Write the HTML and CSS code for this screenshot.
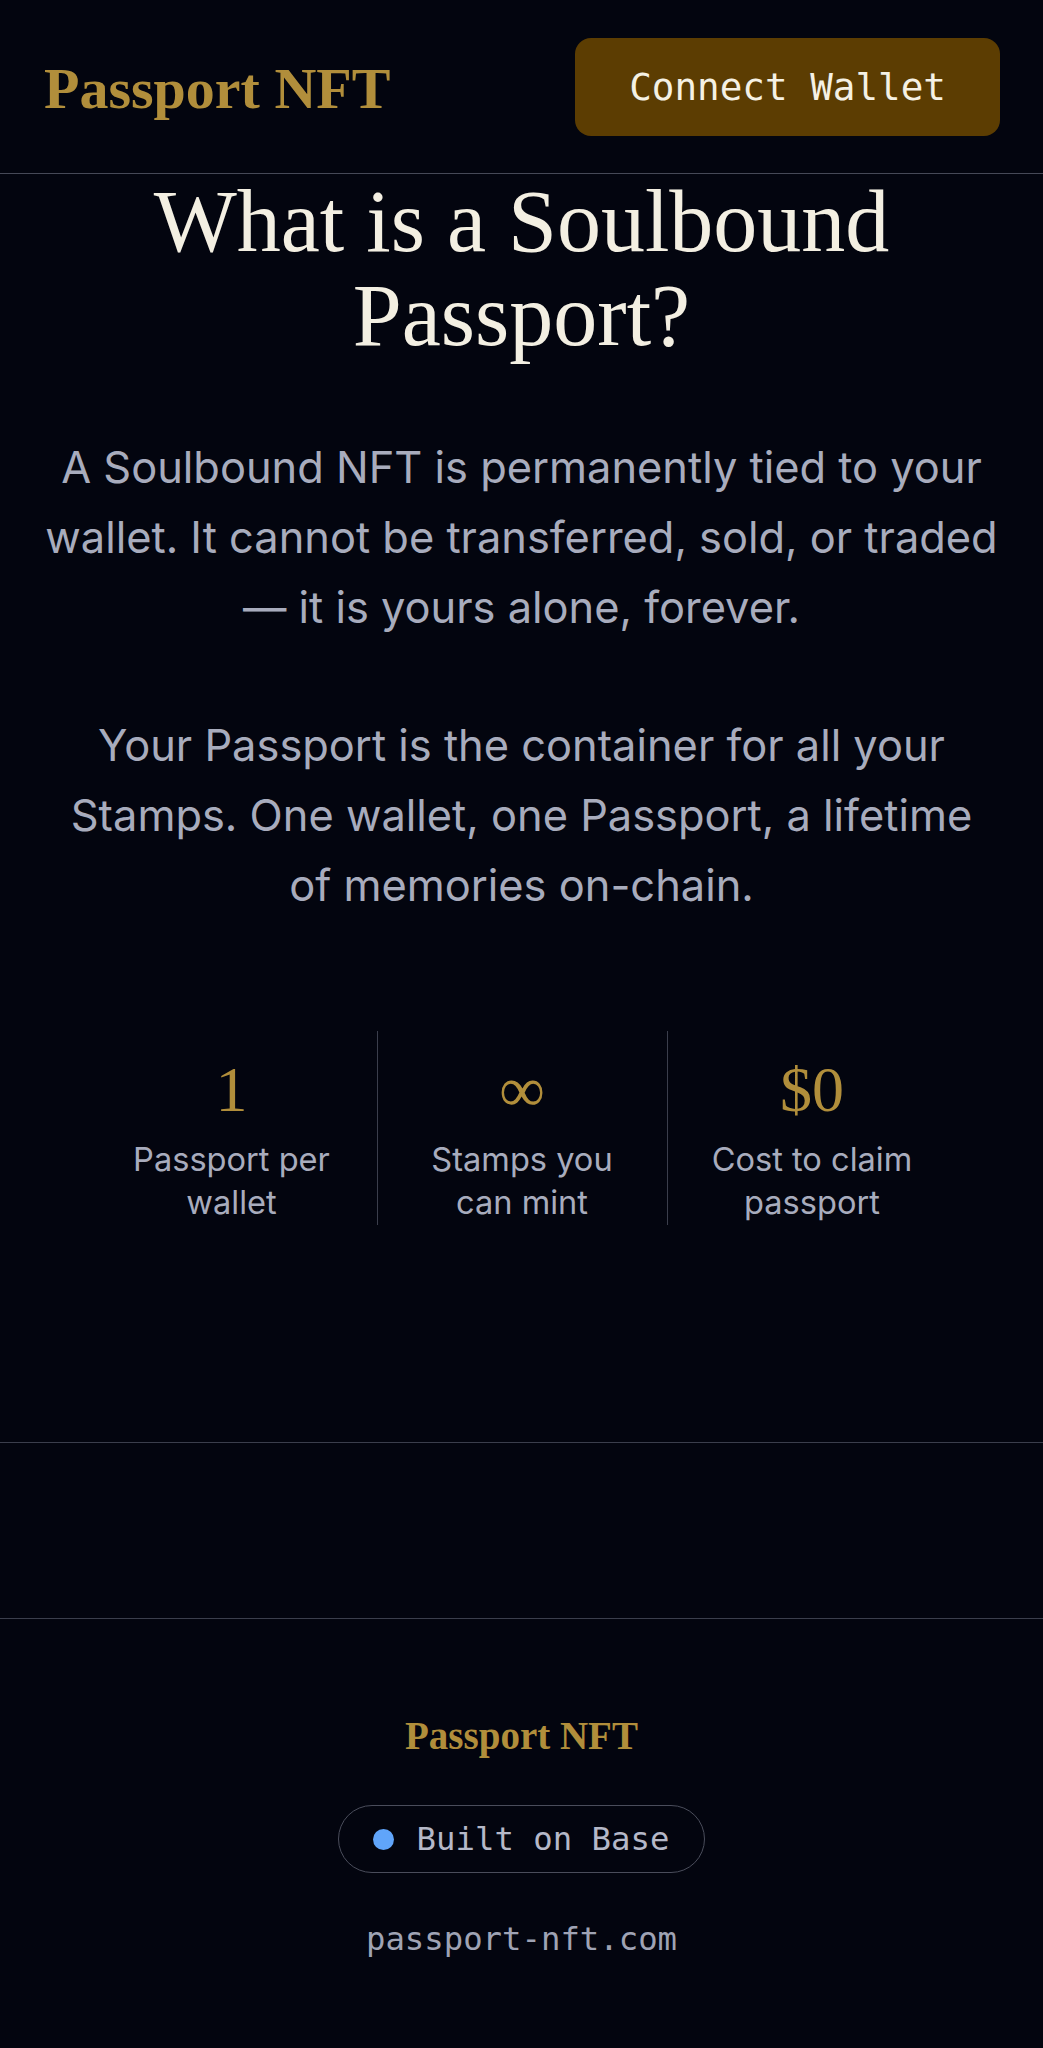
FILE: index.html
```html
<!DOCTYPE html>
<html lang="en">
  <head>
    <meta charset="UTF-8" />
    <meta name="viewport" content="width=device-width, initial-scale=1.0" />
    <title>Passport NFT</title>
    <link rel="stylesheet" href="styles.css">
  </head>
  <body>
    <header class="site-header">
      <div class="logo">Passport NFT</div>
      <button class="connect-btn">Connect Wallet</button>
    </header>
    <main>
      <section class="about">
        <h1>What is a Soulbound Passport?</h1>
        <p>A Soulbound NFT is permanently tied to your wallet. It cannot be transferred, sold, or traded — it is yours alone, forever.</p>
        <p>Your Passport is the container for all your Stamps. One wallet, one Passport, a lifetime of memories on-chain.</p>
        <div class="stats">
          <div class="stat">
            <div class="stat-value">1</div>
            <div class="stat-label">Passport per wallet</div>
          </div>
          <div class="stat">
            <div class="stat-value">∞</div>
            <div class="stat-label">Stamps you can mint</div>
          </div>
          <div class="stat">
            <div class="stat-value">$0</div>
            <div class="stat-label">Cost to claim passport</div>
          </div>
        </div>
      </section>
      <section class="empty-band"></section>
    </main>
    <footer class="site-footer">
      <div class="footer-logo">Passport NFT</div>
      <div class="chain-pill"><span class="dot"></span>Built on Base</div>
      <div class="domain">passport-nft.com</div>
    </footer>
  </body>
</html>
```
FILE: styles.css
```css
* { box-sizing: border-box; }
html, body { margin: 0; background: #03050f; }
body { font-family: Inter, "Noto Sans", sans-serif; color: #a8acbd; }

.site-header { display: flex; align-items: center; justify-content: space-between; height: 174px; padding: 0 43px 0 44px; border-bottom: 1px solid #464957; }
.logo { padding-top: 4px; font-family: "Liberation Serif", serif; font-size: 58px; font-weight: 700; color: #b18e3b; }
.connect-btn { height: 98px; padding: 0 54px; border: 0; border-radius: 16px; background: #5c3d02; color: #f5f1e4; font-family: "DejaVu Sans Mono", monospace; font-size: 37.6px; cursor: pointer; }

.about { padding: 1px 44px 217px; text-align: center; }
.about h1 { margin: 0; font-family: "Liberation Serif", serif; font-size: 88px; font-weight: 400; line-height: 94px; color: #f3efe2; }
.about p { margin: 68px 0 0; font-size: 43.4px; line-height: 70px; }
.about h1 + p { margin-top: 69px; }

.stats { display: grid; grid-template-columns: repeat(3, 290px); justify-content: center; margin-top: 111px; }
.stat { padding: 27px 32px 2px; }
.stat + .stat { border-left: 1px solid #3b3e4c; }
.stat-value { margin-bottom: 16px; font-family: "Liberation Serif", serif; font-size: 64px; line-height: 64px; color: #b18e3b; }
.stat-label { font-size: 32.6px; line-height: 42.7px; }

.empty-band { height: 176px; border-top: 1px solid #3b3e4c; }

.site-footer { display: flex; flex-direction: column; align-items: center; padding: 93px 0 85px; border-top: 1px solid #3b3e4c; }
.footer-logo { margin-bottom: 46px; font-family: "Liberation Serif", serif; font-size: 39px; font-weight: 700; line-height: 47px; color: #b18e3b; }
.chain-pill { display: inline-flex; align-items: center; gap: 23px; height: 68px; padding: 0 35px 0 34px; border: 1px solid #4a4d5b; border-radius: 999px; font-family: "DejaVu Sans Mono", monospace; font-size: 32.3px; color: #b5b8c8; }
.dot { width: 21px; height: 21px; border-radius: 50%; background: #60a5fa; }
.domain { margin-top: 42px; font-family: "DejaVu Sans Mono", monospace; font-size: 32.3px; line-height: 48.5px; color: #9fa3b4; }
```
